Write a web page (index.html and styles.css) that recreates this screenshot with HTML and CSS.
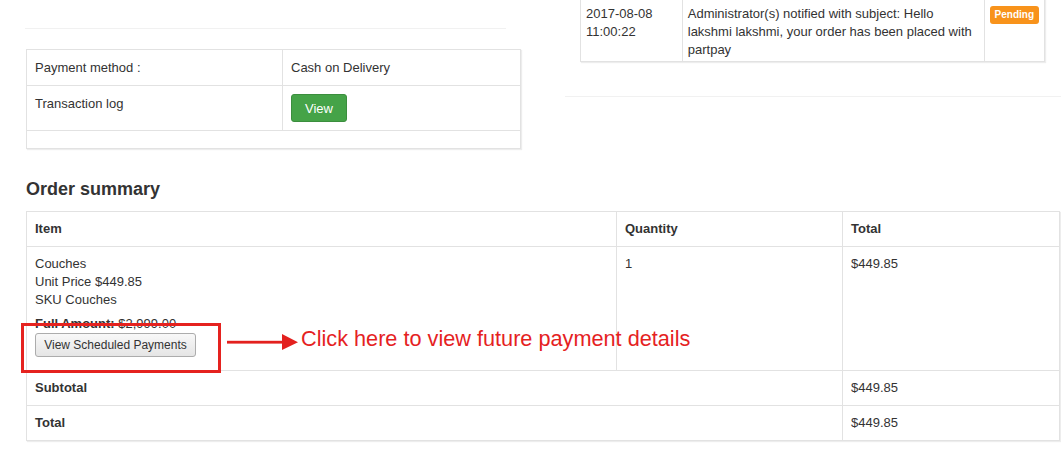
FILE: index.html
```html
<!DOCTYPE html>
<html>
<head>
<meta charset="utf-8">
<link rel="stylesheet" href="styles.css">
</head>
<body>
<div class="page">
  <div class="top">
    <div class="left-col">
      <div class="panel-left"></div>
      <table class="pay-table">
        <tr>
          <td class="pc1">Payment method :</td>
          <td class="pc2">Cash on Delivery</td>
        </tr>
        <tr>
          <td class="pc1">Transaction log</td>
          <td class="pc2"><button class="btn-view">View</button></td>
        </tr>
        <tr>
          <td class="empty" colspan="2"></td>
        </tr>
      </table>
    </div>
    <div class="right-col">
      <div class="panel-right">
        <table class="hist-table">
          <tr>
            <td class="hc1">2017-08-08<br>11:00:22</td>
            <td class="hc2">Administrator(s) notified with subject: Hello<br>lakshmi lakshmi, your order has been placed with<br>partpay</td>
            <td class="hc3"><span class="badge">Pending</span></td>
          </tr>
        </table>
      </div>
    </div>
  </div>

  <h3 class="summary-title">Order summary</h3>
  <table class="order-table">
    <tr>
      <th class="oc1">Item</th>
      <th class="oc2">Quantity</th>
      <th class="oc3">Total</th>
    </tr>
    <tr>
      <td class="item-cell">
        <div class="line">Couches</div>
        <div class="line">Unit Price $449.85</div>
        <div class="line">SKU Couches</div>
        <div class="full"><b>Full Amount:</b> $2,999.00</div>
        <button class="btn-sched">View Scheduled Payments</button>
      </td>
      <td>1</td>
      <td>$449.85</td>
    </tr>
    <tr>
      <td colspan="2"><b>Subtotal</b></td>
      <td>$449.85</td>
    </tr>
    <tr>
      <td colspan="2"><b>Total</b></td>
      <td>$449.85</td>
    </tr>
  </table>

  <div class="annot-box"></div>
  <svg class="annot-arrow" width="74" height="20" viewBox="0 0 74 20">
    <rect x="1" y="8.8" width="57" height="2.8" fill="#e3201e"/>
    <polygon points="56,2 72,10.2 56,18" fill="#e3201e"/>
  </svg>
  <div class="annot-text">Click here to view future payment details</div>
</div>
</body>
</html>
```
FILE: styles.css
```css
html, body {
  margin: 0;
  padding: 0;
  background: #fff;
}
body {
  font-family: "Liberation Sans", Arial, sans-serif;
  font-size: 13px;
  color: #333;
}
.page {
  position: relative;
  width: 1061px;
  height: 469px;
  overflow: hidden;
}
.top {
  display: flex;
  align-items: flex-start;
}
.left-col {
  margin-left: 25px;
  width: 496px;
}
.panel-left {
  width: 481px;
  height: 28px;
  background: #fff;
  border-bottom: 1px solid #f1f1f1;
}
.pay-table {
  margin-top: 20px;
  margin-left: 1px;
  width: 495px;
  border-collapse: collapse;
  box-shadow: 1px 1px 1px rgba(0,0,0,0.07);
}
.pay-table td {
  border: 1px solid #e2e2e2;
  padding: 8px;
  line-height: 19px;
  vertical-align: top;
}
.pay-table .pc1 { width: 239px; }
.pay-table td.empty {
  padding: 0;
  height: 17px;
}
.btn-view {
  display: block;
  width: 56px;
  height: 28px;
  padding: 0;
  margin: 0;
  background: #45a348;
  border: 1px solid #3b8e3e;
  border-radius: 3px;
  color: #fff;
  font-family: "Liberation Sans", Arial, sans-serif;
  font-size: 13px;
}
.right-col {
  margin-left: 44px;
  flex: 1;
}
.panel-right {
  height: 97px;
  border-bottom: 1px solid #f1f1f1;
  padding-left: 15px;
}
.hist-table {
  margin-top: -1px;
  width: 465px;
  border-collapse: collapse;
  box-shadow: 1px 1px 1px rgba(0,0,0,0.07);
}
.hist-table td {
  border: 1px solid #e2e2e2;
  padding: 5px 5px 2px 5px;
  line-height: 18px;
  vertical-align: top;
}
.hist-table .hc1 { width: 91px; }
.hist-table .hc2 { width: 292px; }
.badge {
  display: inline-block;
  background: #f8931b;
  color: #fff;
  font-weight: bold;
  font-size: 10px;
  line-height: 18px;
  padding: 0 5px;
  border-radius: 3px;
}
.summary-title {
  margin: 30px 0 12px 26px;
  font-size: 18px;
  line-height: 20px;
  font-weight: bold;
  color: #333;
}
.order-table {
  margin-left: 26px;
  width: 1034px;
  border-collapse: collapse;
  box-shadow: 1px 1px 1px rgba(0,0,0,0.07);
}
.order-table th,
.order-table td {
  border: 1px solid #e2e2e2;
  padding: 8px;
  line-height: 18px;
  text-align: left;
  vertical-align: top;
}
.order-table th { font-weight: bold; }
.order-table .oc1 { width: 573px; }
.order-table .oc2 { width: 209px; }
.item-cell .full {
  margin-top: 6px;
}
.btn-sched {
  display: block;
  width: 161px;
  height: 24px;
  margin: 0 0 5px 0;
  padding: 0;
  background: linear-gradient(#f8f8f8, #e5e5e5);
  border: 1px solid #acacac;
  border-radius: 3px;
  color: #333;
  font-family: "Liberation Sans", Arial, sans-serif;
  font-size: 12px;
}
.annot-box {
  position: absolute;
  left: 21px;
  top: 323px;
  width: 194px;
  height: 44px;
  border: 3px solid #e5221f;
}
.annot-arrow {
  position: absolute;
  left: 226px;
  top: 332px;
}
.annot-text {
  position: absolute;
  left: 301px;
  top: 327px;
  font-size: 21.7px;
  line-height: 24px;
  color: #e5221f;
  white-space: nowrap;
}
```
